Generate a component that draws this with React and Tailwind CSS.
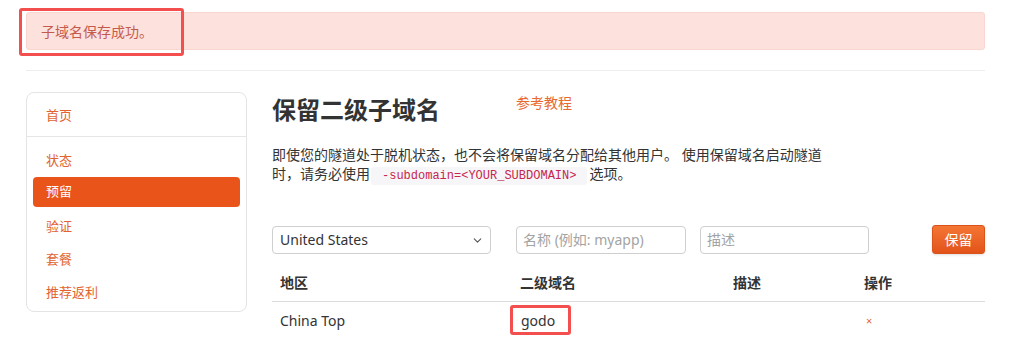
import { ChevronDown } from 'lucide-react';

const NAV = [
  { key: 'status', label: '状态' },
  { key: 'reserve', label: '预留', active: true },
  { key: 'auth', label: '验证' },
  { key: 'plan', label: '套餐' },
  { key: 'referral', label: '推荐返利' },
];

function Sidebar() {
  return (
    <div className="w-[221px] shrink-0 self-start rounded-[8px] border border-[#e4e4e4] bg-white pb-[2px]">
      <div className="flex h-[43px] items-center px-[19px] pt-[3px] text-[13px] text-[#e2632f]">首页</div>
      <div className="h-px bg-[#e6e6e6]" />
      <ul className="pt-[7px]">
        {NAV.map((item) => (
          <li key={item.key} className="flex h-[33px] items-center px-[6px]">
            {item.active ? (
              <span className="flex h-[30px] w-full items-center self-start rounded-[4px] bg-[#e9541b] px-[13px] text-[13px] text-white">
                {item.label}
              </span>
            ) : (
              <span className="px-[13px] text-[13px] text-[#e2632f]">{item.label}</span>
            )}
          </li>
        ))}
      </ul>
    </div>
  );
}

function ReserveForm() {
  return (
    <div className="mt-[39px] flex items-center">
      <div className="relative w-[219px]">
        <select className="h-[28px] w-full appearance-none rounded-[4px] border border-[#cfcfcf] bg-white pl-[7px] text-[14px] text-[#333]">
          <option>United States</option>
        </select>
        <ChevronDown size={13} strokeWidth={2} className="pointer-events-none absolute right-[7px] top-[8px] text-[#555]" />
      </div>
      <input
        placeholder="名称 (例如: myapp)"
        className="ml-[25px] h-[28px] w-[170px] rounded-[4px] border border-[#cfcfcf] px-[6px] text-[14px] text-[#333] placeholder:text-[#a3a3a3]"
      />
      <input
        placeholder="描述"
        className="ml-[14px] h-[28px] w-[169px] rounded-[4px] border border-[#cfcfcf] px-[6px] text-[14px] text-[#333] placeholder:text-[#a3a3a3]"
      />
      <button className="ml-auto h-[29px] w-[53px] rounded-[3px] border border-[#d9531a] bg-gradient-to-b from-[#f47533] to-[#e2531a] text-[14px] text-white shadow-sm">
        保留
      </button>
    </div>
  );
}

function TunnelTable() {
  return (
    <table className="mt-[11px] w-full border-collapse text-[14px] text-[#333]">
      <thead>
        <tr className="border-b border-[#dcdcdc]">
          <th className="w-[240px] px-[8px] py-[8px] text-left font-bold leading-[20px]">地区</th>
          <th className="w-[213px] px-[8px] py-[8px] text-left font-bold leading-[20px]">二级域名</th>
          <th className="w-[131px] px-[8px] py-[8px] text-left font-bold leading-[20px]">描述</th>
          <th className="px-[8px] py-[8px] text-left font-bold leading-[20px]">操作</th>
        </tr>
      </thead>
      <tbody>
        <tr>
          <td className="px-[8px] py-[9px] leading-[20px]">China Top</td>
          <td className="relative px-[9px] py-[9px] leading-[20px]">
            godo
            <span className="absolute left-[-2px] top-[3px] h-[30px] w-[61px] rounded-[3px] border-[3px] border-[#f44f4f]" />
          </td>
          <td className="px-[8px] py-[9px]" />
          <td className="px-[10px] py-[9px] text-[11px] leading-[20px] text-[#e0623a]">×</td>
        </tr>
      </tbody>
    </table>
  );
}

export default function App() {
  return (
    <div
      className="min-h-[350px] bg-white"
      style={{ fontFamily: '"Noto Sans", "Noto Sans CJK SC", sans-serif' }}
    >
      <div className="ml-[26px] w-[959px] pt-[12px]">
        <div className="relative flex h-[38px] items-center rounded-[3px] border border-[#fad6d1] bg-[#fde1dd] px-[14px] text-[14px] text-[#c55a4c]">
          子域名保存成功。
          <span className="absolute left-[-8px] top-[-5px] h-[48px] w-[165px] rounded-[3px] border-[3px] border-[#f44f4f]" />
        </div>
        <div className="mt-[20px] h-px bg-[#eeeeee]" />

        <div className="mt-[21px] flex gap-[25px]">
          <Sidebar />
          <div className="flex-1">
            <div className="flex items-start">
              <h1 className="text-[24px] font-bold leading-[36px] text-[#333]">保留二级子域名</h1>
              <a className="ml-[76px] mt-[1px] text-[14px] leading-[20px] text-[#e9682f]">参考教程</a>
            </div>
            <p className="mt-[17px] max-w-[556px] text-[14px] leading-[19px] text-[#333]">
              即使您的隧道处于脱机状态，也不会将保留域名分配给其他用户。 使用保留域名启动隧道时，请务必使用
              <code
                className="ml-[1px] mr-[2px] rounded-[3px] bg-[#f6f6f8] px-[11px] py-[2px] text-[12px] text-[#c7254e]"
                style={{ fontFamily: '"Liberation Mono", monospace' }}
              >
                -subdomain=&lt;YOUR_SUBDOMAIN&gt;
              </code>
              选项。
            </p>
            <ReserveForm />
            <TunnelTable />
          </div>
        </div>
      </div>
    </div>
  );
}
